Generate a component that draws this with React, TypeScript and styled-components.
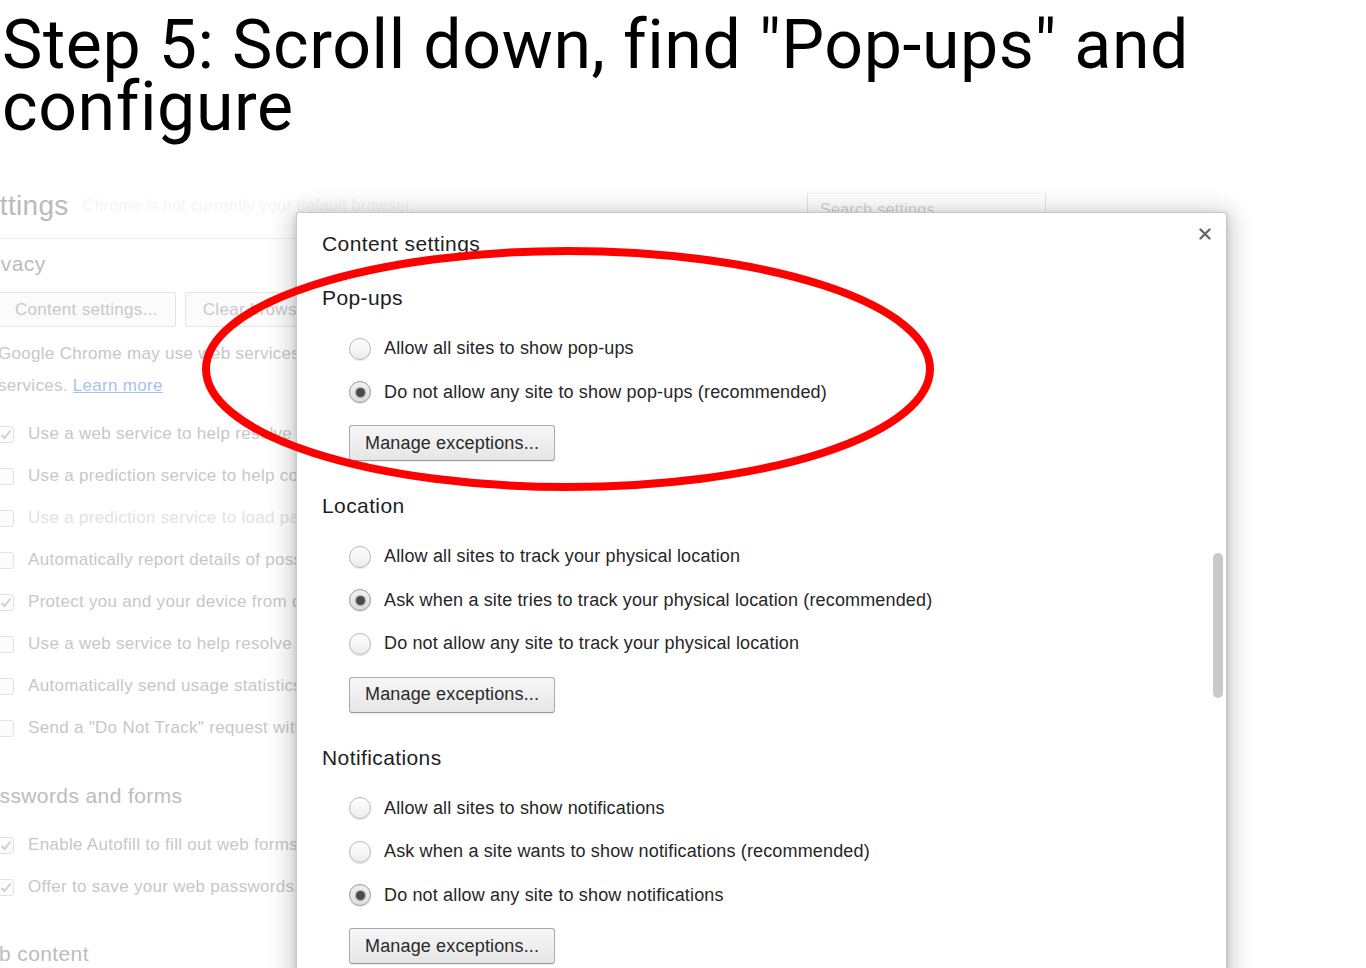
import React from "react";
import styled, { createGlobalStyle } from "styled-components";

const GlobalStyle = createGlobalStyle`
  html, body { margin: 0; padding: 0; background: #fff; }
  body { font-family: "Liberation Sans", Arial, sans-serif; overflow: hidden; }
  * { box-sizing: border-box; }
`;

const Page = styled.main`
  width: 1366px;
  height: 968px;
  overflow: hidden;
  background: #fff;
`;

const Title = styled.h1`
  margin: 0;
  padding: 14px 0 0 2px;
  font-family: Roboto, "Liberation Sans", sans-serif;
  font-weight: 400;
  font-size: 68px;
  line-height: 62px;
  letter-spacing: 0.6px;
  color: #000;
`;

const Shot = styled.figure`
  position: relative;
  margin: 12px 0 0;
  height: 830px;
  overflow: hidden;
  background: #fff;
`;

/* ---------- faded settings page behind the dialog ---------- */

const SettingsPage = styled.div`
  padding-top: 35px;
  color: #c7c7c7;
  font-size: 17px;
  letter-spacing: 0.3px;
  white-space: nowrap;
`;

const SettingsHeader = styled.header`
  display: grid;
  grid-template-columns: 807px 239px;
  height: 40px;
`;

const HeaderLead = styled.div`
  display: flex;
  align-items: center;
  gap: 14px;
`;

const SettingsH1 = styled.h1`
  margin: 0 0 0 -35px;
  font-size: 28px;
  font-weight: 400;
  line-height: 40px;
  letter-spacing: 0.3px;
  color: #bababa;
`;

const DefaultNote = styled.span`
  font-size: 16px;
  color: #f4f4f4;
`;

const SearchField = styled.div`
  margin-top: 8px;
  height: 34px;
  border: 1px solid #e4e4e4;
  border-top-color: #f6f6f6;
  padding: 0 12px;
  font-size: 16px;
  line-height: 32px;
  color: #d4d4d4;
`;

const Divider = styled.hr`
  margin: 13px 0 0;
  width: 1100px;
  border: 0;
  border-top: 1px solid #f0f0f0;
`;

const BgSection = styled.section<{ $top: number }>`
  margin-top: ${(p) => p.$top}px;
`;

const BgHeading = styled.h3<{ $shift: number }>`
  margin: 0 0 0 ${(p) => -p.$shift}px;
  font-size: 21px;
  font-weight: 400;
  line-height: 28px;
  letter-spacing: 0.4px;
  color: #bcbcbc;
`;

const BgBody = styled.div<{ $top: number }>`
  margin: ${(p) => p.$top}px 0 0 -3px;
`;

const BgButtonRow = styled.div`
  display: flex;
  gap: 9px;
`;

const BgButton = styled.span`
  display: inline-flex;
  align-items: center;
  height: 35px;
  padding: 0 17px;
  border: 1px solid #e4e4e4;
  border-radius: 2px;
  background: #fbfbfb;
  color: #c9c9c9;
`;

const BgPara = styled.p`
  margin: 11px 0 0 1px;
  line-height: 32px;
`;

const BgLink = styled.span`
  color: #a8c1ec;
  text-decoration: underline;
`;

const CheckList = styled.ul<{ $top: number }>`
  list-style: none;
  margin: ${(p) => p.$top}px 0 0;
  padding: 0;
`;

const CheckRow = styled.li<{ $dim?: boolean }>`
  display: flex;
  align-items: center;
  gap: 14px;
  height: 42px;
  color: ${(p) => (p.$dim ? "#e2e2e2" : "#c7c7c7")};
`;

const CheckBox = styled.span`
  display: grid;
  place-items: center;
  flex: none;
  width: 17px;
  height: 17px;
  border: 1px solid #e2e2e2;
  border-radius: 3px;
  background: #fcfcfc;
`;

/* ---------- dialog ---------- */

const Dialog = styled.section`
  position: absolute;
  left: 296px;
  top: 62px;
  width: 931px;
  height: 840px;
  background: #fff;
  border: 1px solid rgba(0, 0, 0, 0.22);
  border-radius: 3px;
  box-shadow: 0 4px 23px 5px rgba(0, 0, 0, 0.2), 0 2px 6px rgba(0, 0, 0, 0.15);
  padding: 14px 15px 0 25px;
  color: #222;
  font-size: 18px;
  letter-spacing: 0.15px;
`;

const DialogHeader = styled.header`
  display: flex;
  justify-content: space-between;
  align-items: flex-start;
`;

const DialogTitle = styled.h2`
  margin: 5px 0 0;
  font-size: 21px;
  font-weight: 400;
  line-height: 24px;
  letter-spacing: 0.4px;
  color: #1e1e1e;
`;

const CloseButton = styled.button`
  width: 12px;
  height: 12px;
  margin-top: 1px;
  padding: 0;
  border: 0;
  background: none;
  display: block;
`;

const Section = styled.section<{ $top: number }>`
  margin-top: ${(p) => p.$top}px;
`;

const SectionTitle = styled.h3`
  margin: 0;
  font-size: 21px;
  font-weight: 400;
  line-height: 24px;
  letter-spacing: 0.4px;
  color: #1e1e1e;
`;

const OptionList = styled.div`
  margin: 17px 0 0 27px;
`;

const OptionRow = styled.label`
  display: flex;
  align-items: center;
  gap: 13px;
  height: 43.5px;
  color: #262626;
`;

const Radio = styled.span<{ $checked: boolean }>`
  display: grid;
  place-items: center;
  flex: none;
  width: 22px;
  height: 22px;
  border-radius: 50%;
  border: 1px solid ${(p) => (p.$checked ? "#9c9c9c" : "#b9b9b9")};
  background: ${(p) =>
    p.$checked ? "linear-gradient(#f0f0f0, #dedede)" : "linear-gradient(#ffffff, #ececec)"};
  box-shadow: 0 1px 1px rgba(0, 0, 0, 0.1);

  &::after {
    content: "";
    display: ${(p) => (p.$checked ? "block" : "none")};
    width: 9px;
    height: 9px;
    border-radius: 50%;
    background: #4b4b4b;
    box-shadow: 0 0 1px 1px rgba(75, 75, 75, 0.35);
  }
`;

const ManageButton = styled.button`
  margin: 11px 0 0 27px;
  height: 36px;
  padding: 0 15px;
  border: 1px solid #ababab;
  border-bottom-color: #9a9a9a;
  border-radius: 3px;
  background: linear-gradient(#f7f7f7, #e6e6e6);
  box-shadow: 0 1px 1px rgba(0, 0, 0, 0.08);
  font-family: "Liberation Sans", Arial, sans-serif;
  font-size: 18px;
  letter-spacing: 0.15px;
  color: #2a2a2a;
`;

const ScrollThumb = styled.div`
  position: absolute;
  left: 916px;
  top: 340px;
  width: 10px;
  height: 145px;
  border-radius: 5px;
  background: #c9c9c9;
`;

const Annotation = styled.svg`
  position: absolute;
  inset: 0;
  pointer-events: none;
`;

const CheckMark = () => (
  <svg width="12" height="11" viewBox="0 0 12 11">
    <path d="M1.5 6 L4.5 9 L10.5 1.5" fill="none" stroke="#cfcfcf" strokeWidth="2" />
  </svg>
);

type Opt = { label: string; checked?: boolean };

const sections: { title: string; top: number; options: Opt[] }[] = [
  {
    title: "Pop-ups",
    top: 30,
    options: [
      { label: "Allow all sites to show pop-ups" },
      { label: "Do not allow any site to show pop-ups (recommended)", checked: true },
    ],
  },
  {
    title: "Location",
    top: 33,
    options: [
      { label: "Allow all sites to track your physical location" },
      { label: "Ask when a site tries to track your physical location (recommended)", checked: true },
      { label: "Do not allow any site to track your physical location" },
    ],
  },
  {
    title: "Notifications",
    top: 33,
    options: [
      { label: "Allow all sites to show notifications" },
      { label: "Ask when a site wants to show notifications (recommended)" },
      { label: "Do not allow any site to show notifications", checked: true },
    ],
  },
];

const privacyChecks: { label: string; checked?: boolean; dim?: boolean }[] = [
  { label: "Use a web service to help resolve navigation errors", checked: true },
  { label: "Use a prediction service to help complete searches and URLs typed in the address bar" },
  { label: "Use a prediction service to load pages more quickly", dim: true },
  { label: "Automatically report details of possible security incidents to Google" },
  { label: "Protect you and your device from dangerous sites", checked: true },
  { label: "Use a web service to help resolve spelling errors" },
  { label: "Automatically send usage statistics and crash reports to Google" },
  { label: 'Send a "Do Not Track" request with your browsing traffic' },
];

const passwordChecks = [
  { label: "Enable Autofill to fill out web forms in a single click.", checked: true },
  { label: "Offer to save your web passwords.", checked: true },
];

export default function App() {
  return (
    <Page>
      <GlobalStyle />
      <Title>Step 5: Scroll down, find "Pop-ups" and configure</Title>
      <Shot>
        <SettingsPage>
          <SettingsHeader>
            <HeaderLead>
              <SettingsH1>Settings</SettingsH1>
              <DefaultNote>Chrome is not currently your default browser.</DefaultNote>
            </HeaderLead>
            <SearchField>Search settings</SearchField>
          </SettingsHeader>
          <Divider />
          <BgSection $top={11}>
            <BgHeading $shift={26}>Privacy</BgHeading>
            <BgBody $top={14}>
              <BgButtonRow>
                <BgButton>Content settings...</BgButton>
                <BgButton>Clear browsing data...</BgButton>
              </BgButtonRow>
              <BgPara>
                Google Chrome may use web services to improve your browsing experience. You may optionally disable these
                <br />
                services. <BgLink>Learn more</BgLink>
              </BgPara>
              <CheckList $top={11}>
                {privacyChecks.map((c) => (
                  <CheckRow key={c.label} $dim={c.dim}>
                    <CheckBox>{c.checked && <CheckMark />}</CheckBox>
                    {c.label}
                  </CheckRow>
                ))}
              </CheckList>
            </BgBody>
          </BgSection>
          <BgSection $top={33}>
            <BgHeading $shift={27}>Passwords and forms</BgHeading>
            <BgBody $top={14}>
              <CheckList $top={0}>
                {passwordChecks.map((c) => (
                  <CheckRow key={c.label}>
                    <CheckBox>{c.checked && <CheckMark />}</CheckBox>
                    {c.label}
                  </CheckRow>
                ))}
              </CheckList>
            </BgBody>
          </BgSection>
          <BgSection $top={32}>
            <BgHeading $shift={33}>Web content</BgHeading>
          </BgSection>
        </SettingsPage>

        <Dialog>
          <DialogHeader>
            <DialogTitle>Content settings</DialogTitle>
            <CloseButton aria-label="Close">
              <svg width="12" height="12" viewBox="0 0 12 12">
                <path d="M1.5 1.5 L10.5 10.5 M10.5 1.5 L1.5 10.5" stroke="#666" strokeWidth="2.4" strokeLinecap="round" />
              </svg>
            </CloseButton>
          </DialogHeader>
          {sections.map((s) => (
            <Section key={s.title} $top={s.top}>
              <SectionTitle>{s.title}</SectionTitle>
              <OptionList>
                {s.options.map((o) => (
                  <OptionRow key={o.label}>
                    <Radio $checked={!!o.checked} />
                    {o.label}
                  </OptionRow>
                ))}
              </OptionList>
              <ManageButton>Manage exceptions...</ManageButton>
            </Section>
          ))}
          <ScrollThumb />
        </Dialog>

        <Annotation width="1366" height="830" viewBox="0 0 1366 830">
          <ellipse cx="568" cy="219" rx="362" ry="118" fill="none" stroke="#ff0000" strokeWidth="8" />
        </Annotation>
      </Shot>
    </Page>
  );
}
